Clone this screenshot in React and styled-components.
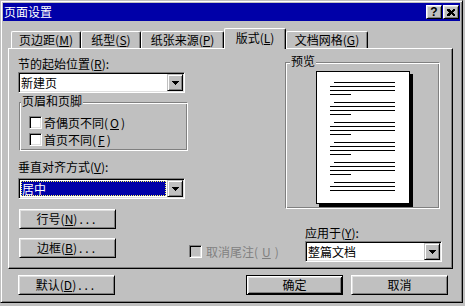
import React from 'react';
import styled, { createGlobalStyle, css } from 'styled-components';

const face = '#c0c0c0';
const light = '#dfdfdf';
const white = '#ffffff';
const shadow = '#808080';
const black = '#000000';
const navy = '#0000a8';

const GlobalStyle = createGlobalStyle`
  * { box-sizing: border-box; }
  html, body { margin: 0; padding: 0; background: ${face}; }
  body {
    font-family: "Noto Sans CJK SC", "Liberation Sans", sans-serif;
    font-size: 12px;
    line-height: 12px;
    color: ${black};
  }
`;

const raised = css`
  border: 1px solid;
  border-color: ${white} ${black} ${black} ${white};
  box-shadow: inset 1px 1px 0 ${light}, inset -1px -1px 0 ${shadow};
`;

const sunken = css`
  border: 1px solid;
  border-color: ${shadow} ${white} ${white} ${shadow};
  box-shadow: inset 1px 1px 0 ${black}, inset -1px -1px 0 ${light};
`;

const Window = styled.div`
  width: 463px;
  height: 303px;
  padding: 2px;
  background: ${face};
  border: 1px solid;
  border-color: ${face} ${black} ${black} ${face};
  box-shadow: inset 1px 1px 0 ${white}, inset -1px -1px 0 ${shadow};
  display: flex;
  flex-direction: column;
`;

const TitleBar = styled.div`
  height: 18px;
  background: ${navy};
  display: flex;
  align-items: center;
  gap: 1px;
  padding: 0 1px 0 1px;
`;

const Caption = styled.div`
  flex: 1;
  color: ${white};
  line-height: 12px;
`;

const CaptionButton = styled.div`
  width: 16px;
  height: 14px;
  background: ${face};
  ${raised};
  display: flex;
  align-items: center;
  justify-content: center;
  font-family: "Liberation Sans", sans-serif;
  font-weight: bold;
  font-size: 12px;
`;

const TabRow = styled.div`
  position: relative;
  z-index: 1;
  display: flex;
  align-items: flex-end;
  height: 20px;
  margin-top: 7px;
  padding-left: 8px;
`;

const Tab = styled.div`
  width: ${(p) => p.$w}px;
  height: ${(p) => (p.$active ? 21 : 17)}px;
  margin-bottom: ${(p) => (p.$active ? -1 : 0)}px;
  padding-bottom: ${(p) => (p.$active ? 3 : 0)}px;
  background: ${face};
  border-top: 1px solid ${white};
  border-left: 1px solid ${white};
  border-right: 1px solid ${black};
  border-radius: 2px 2px 0 0;
  box-shadow: inset -1px 0 0 ${shadow};
  display: flex;
  align-items: center;
  justify-content: center;
`;

const Panel = styled.div`
  margin-left: 5px;
  width: 445px;
  height: 221px;
  border: 1px solid;
  border-color: ${white} ${black} ${black} ${white};
  box-shadow: inset -1px -1px 0 ${shadow};
  display: flex;
  padding: 0 10px 0 9px;
`;

const LeftCol = styled.div`
  width: 170px;
  display: flex;
  flex-direction: column;
  align-items: flex-start;
`;

const MidCol = styled.div`
  width: 97px;
  display: flex;
  flex-direction: column;
  justify-content: flex-end;
  padding: 0 0 10px 1px;
`;

const RightCol = styled.div`
  width: 157px;
  display: flex;
  flex-direction: column;
  align-items: flex-start;
`;

const Label = styled.div`
  height: 12px;
  line-height: 12px;
  margin-top: ${(p) => p.$mt}px;
  margin-left: ${(p) => p.$ml || 0}px;
  white-space: nowrap;
`;

const Key = styled.span`
  text-decoration: underline;
`;

const Dots = styled.span`
  letter-spacing: 3px;
  margin-left: 2px;
`;

const Combo = styled.div`
  width: ${(p) => p.$w}px;
  height: 21px;
  margin-top: ${(p) => p.$mt}px;
  margin-left: ${(p) => p.$ml || 0}px;
  padding: 1px;
  background: ${white};
  ${sunken};
  display: flex;
`;

const ComboValue = styled.div`
  flex: 1;
  display: flex;
  align-items: center;
  padding: 1px;
`;

const ComboText = styled.span`
  flex: 1;
  height: 100%;
  display: flex;
  align-items: center;
  ${(p) =>
    p.$focused &&
    css`
      background: ${navy};
      color: ${white};
      border: 1px dotted #ffff60;
    `}
`;

const DropButton = styled.div`
  width: 16px;
  height: 17px;
  background: ${face};
  border: 1px solid;
  border-color: ${face} ${black} ${black} ${face};
  box-shadow: inset 1px 1px 0 ${white}, inset -1px -1px 0 ${shadow};
  display: flex;
  align-items: center;
  justify-content: center;
`;

const Group = styled.div`
  position: relative;
  width: ${(p) => p.$w}px;
  height: ${(p) => p.$h}px;
  margin-top: ${(p) => p.$mt}px;
  margin-left: ${(p) => p.$ml || 0}px;
  border: 1px solid;
  border-color: ${shadow} ${white} ${white} ${shadow};
  box-shadow: inset 1px 1px 0 ${white}, inset -1px -1px 0 ${shadow};
`;

const Legend = styled.span`
  position: absolute;
  top: -8px;
  left: ${(p) => p.$left}px;
  padding: 0 1px;
  background: ${face};
  line-height: 12px;
`;

const CheckList = styled.div`
  display: flex;
  flex-direction: column;
  gap: 4px;
  padding: 13px 0 0 9px;
`;

const CheckRow = styled.div`
  display: flex;
  align-items: center;
  gap: ${(p) => (p.$disabled ? 4 : 2)}px;
  height: 13px;
  color: ${(p) => (p.$disabled ? shadow : black)};
  white-space: nowrap;
`;

const Box = styled.span`
  width: 13px;
  height: 13px;
  flex: none;
  background: ${(p) => (p.$disabled ? face : white)};
  ${sunken};
`;

const Button = styled.div`
  width: 97px;
  height: 20px;
  margin-top: ${(p) => p.$mt || 0}px;
  margin-left: ${(p) => p.$ml || 0}px;
  background: ${face};
  display: flex;
  align-items: center;
  justify-content: center;
  white-space: nowrap;
  ${(p) =>
    p.$default
      ? css`
          border: 1px solid ${black};
          box-shadow: inset 1px 1px 0 ${white}, inset -1px -1px 0 ${black},
            inset 2px 2px 0 ${light}, inset -2px -2px 0 ${shadow};
        `
      : raised};
`;

const Preview = styled.div`
  display: flex;
  padding: 8px 0 0 30px;
`;

const Page = styled.div`
  width: 94px;
  height: 133px;
  background: ${white};
  border: 1px solid ${black};
  box-shadow: 3px 3px 0 ${black};
  padding: 10px 0 0 13px;
  display: flex;
  flex-direction: column;
  gap: 7px;
  overflow: hidden;
`;

const Para = styled.div`
  display: flex;
  flex-direction: column;
  gap: 3px;
`;

const Line = styled.div`
  height: 1px;
  width: ${(p) => p.$w}px;
  margin-left: ${(p) => p.$indent || 0}px;
  background: ${black};
`;

const Footer = styled.div`
  display: flex;
  justify-content: space-between;
  margin-top: 6px;
  padding: 0 12px 0 15px;
`;

const FooterRight = styled.div`
  display: flex;
  gap: 8px;
`;

const Arrow = () => (
  <svg width="7" height="4" viewBox="0 0 7 4" shapeRendering="crispEdges">
    <rect x="0" y="0" width="7" height="1" fill={black} />
    <rect x="1" y="1" width="5" height="1" fill={black} />
    <rect x="2" y="2" width="3" height="1" fill={black} />
    <rect x="3" y="3" width="1" height="1" fill={black} />
  </svg>
);

const CloseGlyph = () => (
  <svg width="8" height="7" viewBox="0 0 8 7" shapeRendering="crispEdges">
    <path d="M0 0h2l2 2 2-2h2v1L6 3.5 8 6v1H6L4 5 2 7H0V6l2-2.5L0 1z" fill={black} />
  </svg>
);

const Select = ({ w, mt, ml, value, focused }) => (
  <Combo $w={w} $mt={mt} $ml={ml}>
    <ComboValue>
      <ComboText $focused={focused}>{value}</ComboText>
    </ComboValue>
    <DropButton>
      <Arrow />
    </DropButton>
  </Combo>
);

const tabs = [
  { label: '页边距', key: 'M', w: 70 },
  { label: '纸型', key: 'S', w: 60 },
  { label: '纸张来源', key: 'P', w: 83 },
  { label: '版式', key: 'L', w: 62, active: true },
  { label: '文档网格', key: 'G', w: 82 },
];

const paragraphs = [4, 4, 4, 4, 4, 3];

export default function App() {
  return (
    <>
      <GlobalStyle />
      <Window>
        <TitleBar>
          <Caption>页面设置</Caption>
          <CaptionButton>?</CaptionButton>
          <CaptionButton>
            <CloseGlyph />
          </CaptionButton>
        </TitleBar>

        <TabRow>
          {tabs.map((t) => (
            <Tab key={t.key} $w={t.w} $active={t.active}>
              {t.label}(<Key>{t.key}</Key>)
            </Tab>
          ))}
        </TabRow>

        <Panel>
          <LeftCol>
            <Label $mt={9}>
              节的起始位置(<Key>R</Key>):
            </Label>
            <Select w={167} mt={2} value="新建页" />

            <Group $w={169} $h={49} $mt={9} $ml={1}>
              <Legend $left={1}>页眉和页脚</Legend>
              <CheckList>
                <CheckRow>
                  <Box />
                  奇偶页不同(<Key>O</Key>)
                </CheckRow>
                <CheckRow>
                  <Box />
                  首页不同(<Key>F</Key>)
                </CheckRow>
              </CheckList>
            </Group>

            <Label $mt={10}>
              垂直对齐方式(<Key>V</Key>):
            </Label>
            <Select w={167} mt={5} value="居中" focused />

            <Button $mt={10} $ml={1}>
              行号(<Key>N</Key>)<Dots>...</Dots>
            </Button>
            <Button $mt={9} $ml={1}>
              边框(<Key>B</Key>)<Dots>...</Dots>
            </Button>
          </LeftCol>

          <MidCol>
            <CheckRow $disabled>
              <Box $disabled />
              取消尾注(<Key>U</Key>)
            </CheckRow>
          </MidCol>

          <RightCol>
            <Group $w={155} $h={147} $mt={13}>
              <Legend $left={4}>预览</Legend>
              <Preview>
                <Page>
                  {paragraphs.map((n, i) => (
                    <Para key={i}>
                      <Line $w={61} $indent={4} />
                      <Line $w={65} />
                      <Line $w={65} />
                      {n === 4 && <Line $w={21} />}
                    </Para>
                  ))}
                </Page>
              </Preview>
            </Group>
            <Label $mt={18} $ml={20}>
              应用于(<Key>Y</Key>):
            </Label>
            <Select w={137} mt={2} ml={20} value="整篇文档" />
          </RightCol>
        </Panel>

        <Footer>
          <Button>
            默认(<Key>D</Key>)<Dots>...</Dots>
          </Button>
          <FooterRight>
            <Button $default>确定</Button>
            <Button>取消</Button>
          </FooterRight>
        </Footer>
      </Window>
    </>
  );
}
